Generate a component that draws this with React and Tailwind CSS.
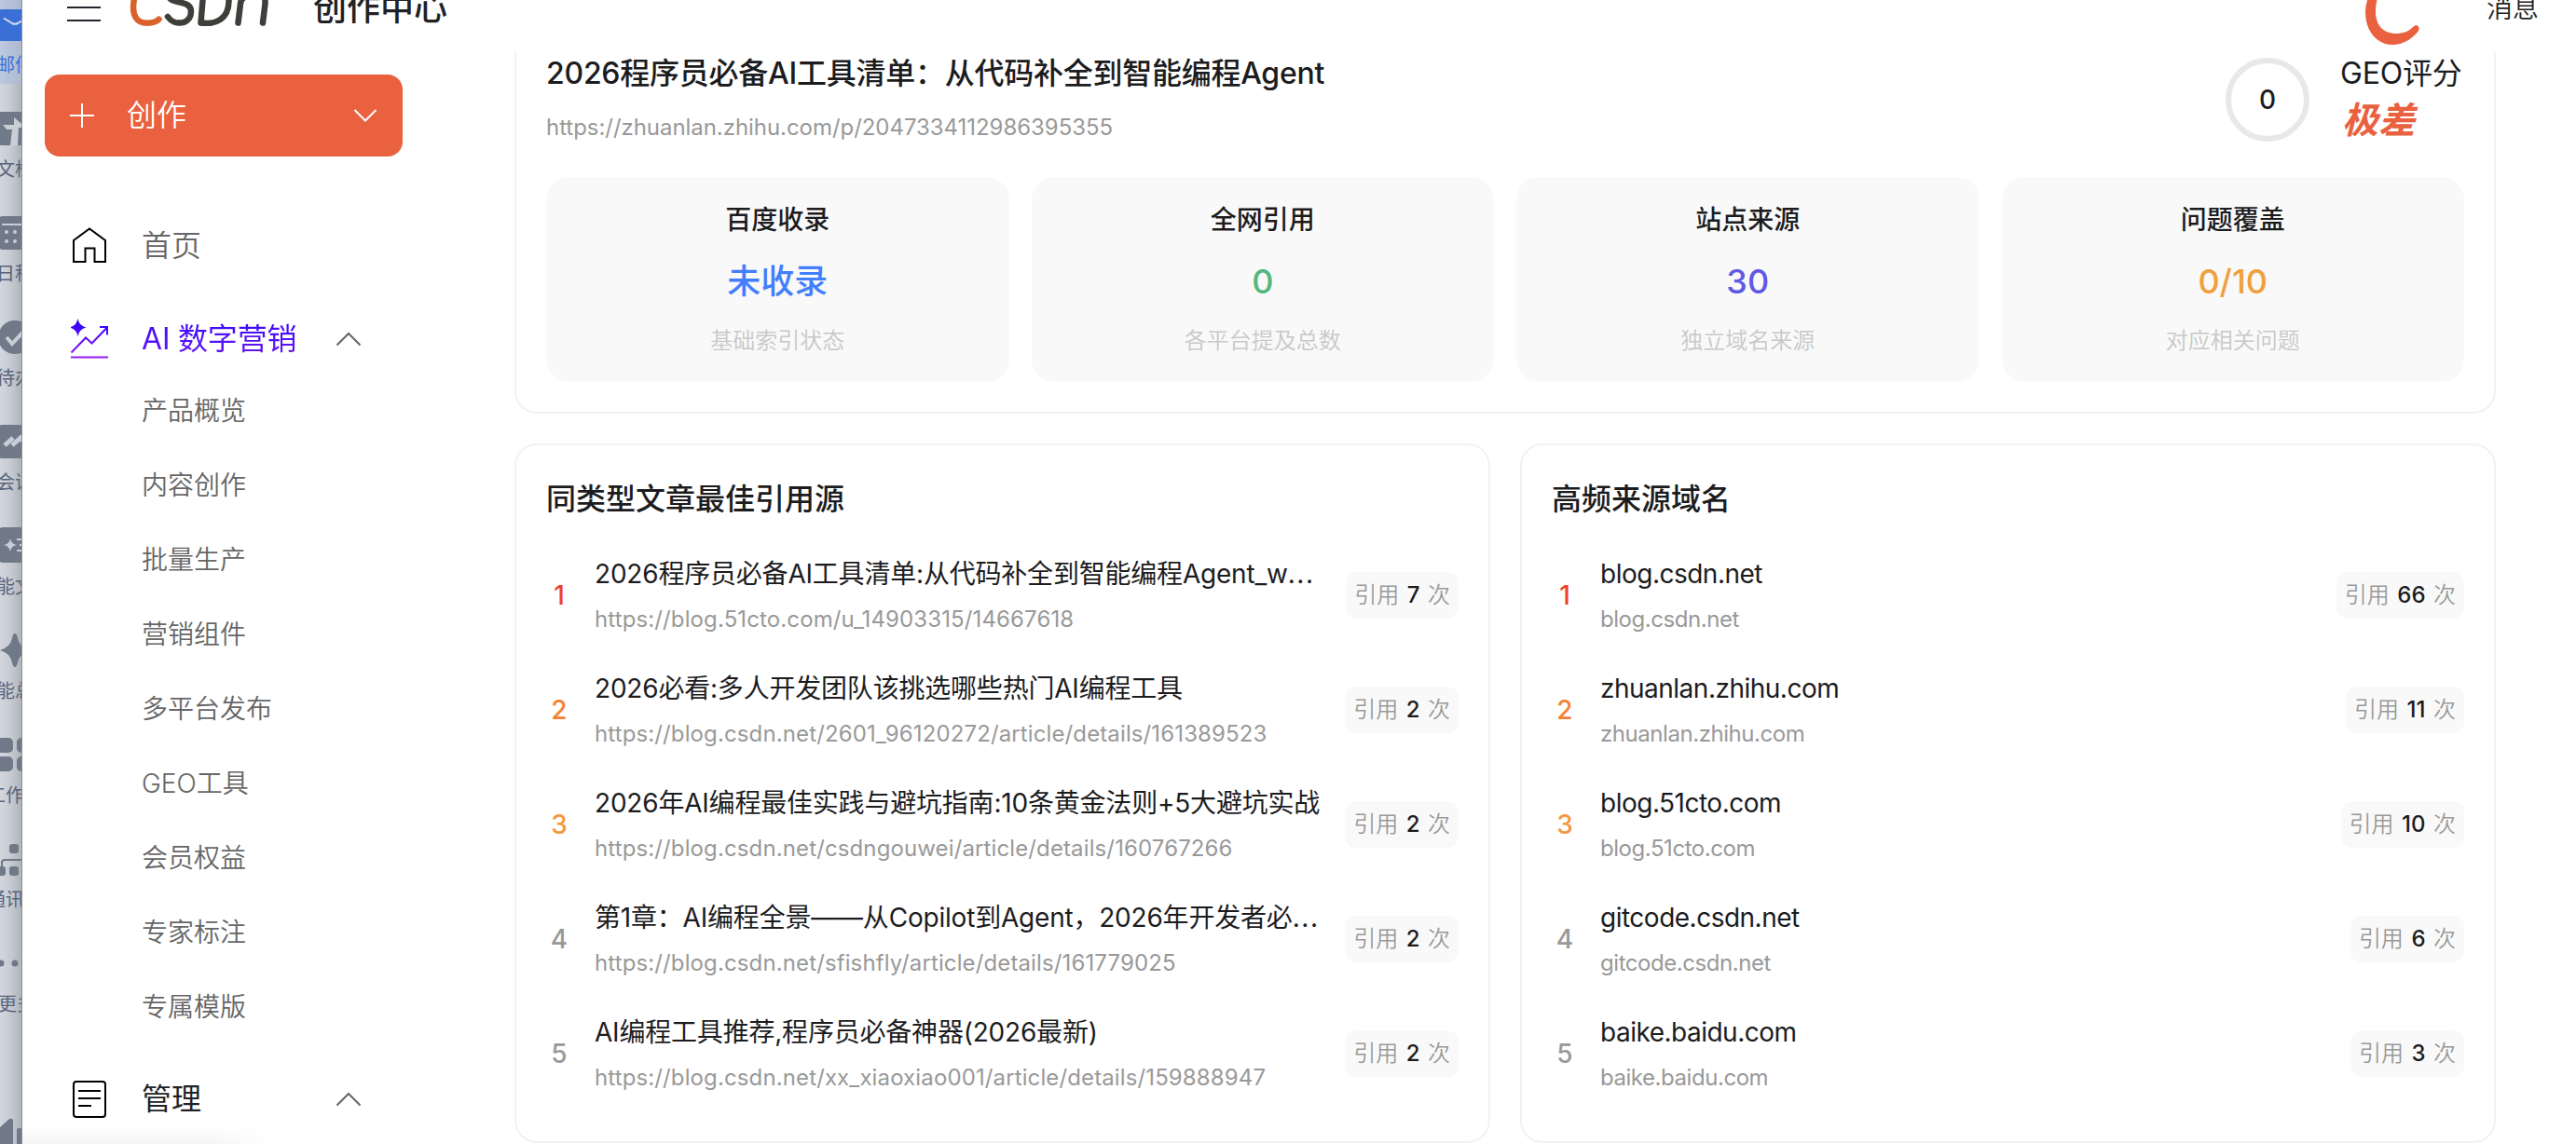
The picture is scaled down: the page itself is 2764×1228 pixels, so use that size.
import React from 'react';

const subMenu = ['产品概览', '内容创作', '批量生产', '营销组件', '多平台发布', 'GEO工具', '会员权益', '专家标注', '专属模版'];

const stats = [
  { label: '百度收录', value: '未收录', hint: '基础索引状态', color: 'text-[#437efc]' },
  { label: '全网引用', value: '0', hint: '各平台提及总数', color: 'text-[#52b780]' },
  { label: '站点来源', value: '30', hint: '独立域名来源', color: 'text-[#5f5ae6]' },
  { label: '问题覆盖', value: '0/10', hint: '对应相关问题', color: 'text-[#f0a03c]' },
];

const articles = [
  { title: '2026程序员必备AI工具清单:从代码补全到智能编程Agent_w', url: 'https://blog.51cto.com/u_14903315/14667618', count: 7, cut: true },
  { title: '2026必看:多人开发团队该挑选哪些热门AI编程工具', url: 'https://blog.csdn.net/2601_96120272/article/details/161389523', count: 2 },
  { title: '2026年AI编程最佳实践与避坑指南:10条黄金法则+5大避坑实战', url: 'https://blog.csdn.net/csdngouwei/article/details/160767266', count: 2 },
  { title: '第1章：AI编程全景——从Copilot到Agent，2026年开发者必', url: 'https://blog.csdn.net/sfishfly/article/details/161779025', count: 2, cut: true },
  { title: 'AI编程工具推荐,程序员必备神器(2026最新)', url: 'https://blog.csdn.net/xx_xiaoxiao001/article/details/159888947', count: 2 },
];

const domains = [
  { title: 'blog.csdn.net', url: 'blog.csdn.net', count: 66 },
  { title: 'zhuanlan.zhihu.com', url: 'zhuanlan.zhihu.com', count: 11 },
  { title: 'blog.51cto.com', url: 'blog.51cto.com', count: 10 },
  { title: 'gitcode.csdn.net', url: 'gitcode.csdn.net', count: 6 },
  { title: 'baike.baidu.com', url: 'baike.baidu.com', count: 3 },
];

const rankColors = ['text-[#ee4328]', 'text-[#f58233]', 'text-[#f2993d]', 'text-[#999999]', 'text-[#999999]'];

const dockItems = [
  {
    label: '邮件',
    icon: (
      <>
        <rect x="-2" width="40" height="34" rx="4" fill="#3a70d6" />
        <path d="M4 9.500l9 5.500q3 1.600 6 0l9-5.500" fill="none" stroke="#d5dced" strokeWidth="2" />
      </>
    ),
    active: true,
  },
  {
    label: '文档',
    icon: (
      <>
        <rect x="-2" width="40" height="36" rx="4" />
        <path d="M15 6l13 11h-8l-1 19h-8l2-17H7l-4-5h12z" fill="#c9cdd5" />
      </>
    ),
  },
  {
    label: '日程',
    icon: (
      <>
        <rect x="-2" width="40" height="36" rx="5" />
        <path d="M2 9h30" stroke="#c9cdd5" strokeWidth="2" />
        <g fill="#c9cdd5">
          <circle cx="7" cy="17" r="2" />
          <circle cx="16" cy="17" r="2" />
          <circle cx="7" cy="27" r="2" />
          <circle cx="16" cy="27" r="2" />
        </g>
      </>
    ),
  },
  {
    label: '待办',
    icon: (
      <>
        <circle cx="16" cy="18" r="18" />
        <path d="M7 18l6 7 13-14" fill="none" stroke="#c9cdd5" strokeWidth="4" />
      </>
    ),
  },
  {
    label: '会议',
    icon: (
      <>
        <rect x="-3" width="40" height="36" rx="5" />
        <path d="M5 22l9-8M13 22l9-8 6 7" fill="none" stroke="#c9cdd5" strokeWidth="5" />
      </>
    ),
  },
  {
    label: '能文',
    icon: (
      <>
        <rect x="-2" y="-2" width="40" height="38" rx="5" />
        <path d="M11 10q1 6 7 7-6 1-7 7-1-6-7-7 6-1 7-7zM18 10h8v2h-8zM21 16h8v2h-8zM18 22h8v2h-8z" fill="#c9cdd5" />
      </>
    ),
  },
  {
    label: '能总',
    icon: <path d="M16 0q2 0 3 5 2 10 13 13-11 3-13 13-1 5-3 5t-3-5Q11 21 0 18 11 15 13 5q1-5 3-5z" />,
  },
  {
    label: '工作',
    icon: (
      <>
        <rect x="-6" width="20" height="16" rx="5" />
        <rect x="18" width="20" height="16" rx="5" />
        <rect x="-6" y="20" width="20" height="16" rx="5" />
        <rect x="18" y="20" width="20" height="16" rx="5" />
      </>
    ),
  },
  {
    label: '通讯',
    icon: (
      <>
        <rect x="10" y="2" width="10" height="10" rx="3" />
        <rect x="-4" y="26" width="10" height="10" rx="3" />
        <rect x="10" y="26" width="10" height="10" rx="3" />
        <path d="M2 28v-6q0-3 3-3h22" fill="none" stroke="#6f7987" strokeWidth="2" />
      </>
    ),
  },
  {
    label: '更多',
    icon: (
      <>
        <circle cx="1" cy="18" r="3.500" />
        <circle cx="16" cy="18" r="3.500" />
      </>
    ),
  },
];

// horizontal nudge of each label, they are cut by both edges of the dock
const dockShift = ['-ml-1', '-ml-1', '-ml-1', '-ml-1', '-ml-1', '-ml-1', '-ml-1', '-ml-3.5', '-ml-3.5', '-ml-0.5'];

function Dock() {
  return (
    <aside className="flex h-full w-6 shrink-0 flex-col overflow-hidden border-r border-[#8d9095] bg-linear-to-r from-[#d2d6df] via-[#c6cad1] to-[#b0b4ba]">
      {dockItems.map((item, i) => (
        <div key={item.label} className="h-[112px] shrink-0">
          <div className={`flex h-[90px] flex-col ${item.active ? 'bg-linear-to-r from-[#bdc9e0] to-[#aeb9ce] pt-2.5' : 'pt-2'}`}>
            <svg className="h-[38px] w-6 overflow-visible" viewBox="0 0 24 38" fill="#6f7987">{item.icon}</svg>
            <div className={`mt-auto mb-[7px] w-12 text-[20px] leading-[26px] whitespace-nowrap ${dockShift[i]} ${item.active ? 'text-[#3a70d6]' : 'text-[#59647a]'}`}>
              {item.label}
            </div>
          </div>
        </div>
      ))}
      <svg className="mt-auto h-[28px] w-6 shrink-0" viewBox="0 0 24 28" fill="#6f7987">
        <path d="M0 10L10 1q4-1 4 2v25H0zM18 13q0-2 2-2h4v17h-6z" />
      </svg>
    </aside>
  );
}

function Logo() {
  return (
    <svg className="h-[56px] w-[160px]" viewBox="134 -28 160 56" fill="none" strokeWidth="6.500" strokeLinecap="round">
      <path d="M172-18Q146-24 143.500 2C141.500 16 146 24.700 158 24.700q9 0 12.500-4" stroke="#d9622b" />
      <g stroke="#3f3e3b">
        <path d="M208-18C188-24 176-8 183-1c5 5 22 2 22 13 0 15-18 16-25 6" />
        <path d="M219-18l-3.500 42.500C232 27 245 20 245.500 2 246-14 238-19 219-18z" strokeLinejoin="round" />
        <path d="M255.500 24.500L258 4q1-9 12-9h9q6 0 5.500 9L282 24.500" />
      </g>
    </svg>
  );
}

function Header() {
  return (
    <header className="h-14 shrink-0 overflow-hidden">
      <div className="-mt-14 flex h-[128px] items-center pr-10 pl-12">
        <svg className="h-9 w-9" viewBox="0 0 36 36" stroke="#24262e" strokeWidth="2">
          <path d="M0 3h36M0 18h36M0 32h36" />
        </svg>
        <div className="-mt-4 ml-[26px]"><Logo /></div>
        <h1 className="ml-[42px] pt-0.5 text-[36px] font-medium text-[#222226]">创作中心</h1>
        <svg className="mr-[57px] ml-auto h-[84px] w-[84px]" viewBox="0 0 84 84" fill="#ea6140">
          <path d="M62-14C28-14 11 30 11 47c0 20 12 35 29 35 13 0 23-8 28-15q2-4-2-6-2 0-4 2c-5 5-11 7-18 7-14 0-22-9-22-24 0-16 10-50 40-50z" />
        </svg>
        <span className="pt-0.5 text-[28px] font-[350] text-[#222226]">消息</span>
      </div>
    </header>
  );
}

function Chevron({ down }) {
  return (
    <svg className="h-4 w-[26px]" viewBox="0 0 26 16" fill="none" stroke="currentColor" strokeWidth="2">
      <path d={down ? 'M1.500 2L13 13.500 24.500 2' : 'M.5 14.500L13 2l12.500 12.500'} />
    </svg>
  );
}

function HomeIcon() {
  return (
    <svg className="h-10 w-10" viewBox="0 0 40 40" fill="none" stroke="#000" strokeWidth="2">
      <path d="M3 15L20 2.500 37 15v23H25.500V23.500h-10V38H3z" />
    </svg>
  );
}

function MarketingIcon() {
  return (
    <svg className="h-11 w-10" viewBox="0 0 40 44" fill="none" strokeWidth="2">
      <defs>
        <linearGradient id="mk" x1="0" y1="0" x2="0" y2="44" gradientUnits="userSpaceOnUse">
          <stop stopColor="#2400ff" />
          <stop offset="1" stopColor="#9a1cf5" />
        </linearGradient>
      </defs>
      <path d="M7.500 0q1.500 8 9 9.500-7.500 1.500-9 9.500-1.500-8-9-9.500Q6 8 7.500 0z" fill="url(#mk)" />
      <path d="M.5 36.500L16 20.500l6.500 6L39 9.500M31 9h8v8.500M0 41.500h40" stroke="url(#mk)" />
    </svg>
  );
}

function NoteIcon() {
  return (
    <svg className="h-10 w-10" viewBox="0 0 40 40" fill="none" stroke="#000" strokeWidth="2">
      <rect x="3" y="1" width="34" height="38" rx="3" />
      <path d="M8 11h24M8 19h24M8 27h14" />
    </svg>
  );
}

function Sidebar() {
  return (
    <aside className="relative w-[528px] shrink-0 pt-6 pl-6">
      <button className="flex h-[88px] w-[384px] items-center rounded-2xl bg-[#ea6140] pr-[27px] pl-[27px] text-white">
        <svg className="h-[26px] w-[26px]" viewBox="0 0 26 26" stroke="currentColor" strokeWidth="2">
          <path d="M0 13h26M13 0v26" />
        </svg>
        <span className="ml-[35px] text-[32px] font-[350]">创作</span>
        <span className="ml-auto"><Chevron down /></span>
      </button>
      <nav className="pt-[45px] pl-7">
        <div className="flex h-[100px] items-center gap-9 text-[32px] font-[350] text-[#666666]">
          <HomeIcon />
          <span className="pt-0.5">首页</span>
        </div>
        <div className="mt-[14px] flex h-[74px] items-center gap-9 text-[32px]">
          <MarketingIcon />
          <span className="w-[173px] bg-linear-to-b from-[#3300ff] to-[#6d14f0] bg-clip-text tracking-[-0.2px] whitespace-nowrap text-transparent">AI 数字营销</span>
          <span className="flex text-[#666666]"><Chevron /></span>
        </div>
        <ul className="pl-[76px] text-[28px] font-[350] text-[#666666]">
          {subMenu.map((name) => (
            <li key={name} className="flex h-20 items-center">{name}</li>
          ))}
        </ul>
        <div className="mt-[22px] flex h-[74px] items-center gap-9 text-[32px] text-[#222226]">
          <NoteIcon />
          <span className="w-[173px]">管理</span>
          <span className="flex text-[#666666]"><Chevron /></span>
        </div>
      </nav>
      {/* soft shadow over the end of the scroll area */}
      <div className="absolute bottom-0 left-0 h-5 w-[270px] bg-linear-to-t from-black/4 to-transparent mask-r-from-75%" />
    </aside>
  );
}

function Overview() {
  return (
    <section className="h-[388px] rounded-b-3xl border-2 border-t-0 border-[#f2f2f2] px-8">
      <div className="flex h-[134px] justify-between">
        <div>
          <h2 className="text-[32px] leading-[46px] font-medium tracking-[-0.25px] text-[#1c1c1e]">
            2026程序员必备AI工具清单：从代码补全到智能编程Agent
          </h2>
          <p className="mt-[19px] text-[24px] leading-8 tracking-[-0.05px] text-[#999999]">https://zhuanlan.zhihu.com/p/2047334112986395355</p>
        </div>
        <div className="flex">
          <div className="mt-1.5 flex h-[90px] w-[90px] items-center justify-center rounded-full border-6 border-[#e8e8e8] text-[28px] font-medium text-[#1c1c1e]">
            0
          </div>
          <div className="ml-[33px] w-[133px] whitespace-nowrap">
            <div className="text-[32px] leading-[46px] tracking-[-0.2px] text-[#1c1c1e]">GEO评分</div>
            <div className="mt-0.5 ml-0.5 text-[39px] leading-[50px] font-bold text-[#ea6140] italic">极差</div>
          </div>
        </div>
      </div>
      <div className="grid h-[220px] grid-cols-4 gap-6">
        {stats.map((s) => (
          <div key={s.label} className="rounded-3xl bg-[#f9f9f9] pt-[26px] text-center">
            <div className="text-[28px] leading-10 font-medium text-[#1c1c1e]">{s.label}</div>
            <div className={`mt-[22px] text-[36px] leading-[48px] font-medium ${s.color}`}>{s.value}</div>
            <div className="mt-6 text-[24px] leading-8 font-[350] text-[#c8c8c8]">{s.hint}</div>
          </div>
        ))}
      </div>
    </section>
  );
}

function RankList({ title, items, titleClass, urlClass }) {
  return (
    <section className="h-[751px] min-w-0 rounded-3xl border-2 border-[#f2f2f2] px-8 pt-[34px]">
      <h3 className="text-[32px] leading-[48px] font-medium text-[#1c1c1e]">{title}</h3>
      <ol className="mt-[17px]">
        {items.map((item, i) => (
          <li key={item.title} className="flex h-[123.2px] items-center">
            <span className={`w-7 text-center text-[28px] font-medium ${rankColors[i]}`}>{i + 1}</span>
            <div className="ml-6 min-w-0 flex-1 whitespace-nowrap">
              <div className={`text-[28px] leading-10 text-[#1c1c1e] ${titleClass}`}>
                {item.title}
                {item.cut && <span className="tracking-[1.6px]">...</span>}
              </div>
              <div className={`mt-3 text-[24px] leading-[34px] text-[#999999] ${urlClass}`}>{item.url}</div>
            </div>
            <span className="flex h-[50px] items-center gap-[8.5px] rounded-xl bg-[#f9f9f9] px-[9px] text-[24px] font-[350] text-[#999999]">
              引用
              <b className="font-medium text-[#1c1c1e]">{item.count}</b>
              次
            </span>
          </li>
        ))}
      </ol>
    </section>
  );
}

function App() {
  return (
    <div className="flex h-[1228px] w-[2764px] overflow-hidden bg-white font-['Inter','Noto_Sans_CJK_SC',sans-serif]">
      <Dock />
      <div className="flex min-w-0 flex-1 flex-col">
        <Header />
        <div className="flex min-h-0 flex-1">
          <Sidebar />
          <main className="min-w-0 flex-1 pr-[86px]">
            <Overview />
            <div className="mt-8 grid grid-cols-2 gap-8">
              <RankList title="同类型文章最佳引用源" items={articles} titleClass="tracking-[-0.2px]" urlClass="tracking-[0.12px]" />
              <RankList title="高频来源域名" items={domains} titleClass="tracking-[-0.5px]" urlClass="tracking-[-0.45px]" />
            </div>
          </main>
        </div>
      </div>
    </div>
  );
}

export default App;
